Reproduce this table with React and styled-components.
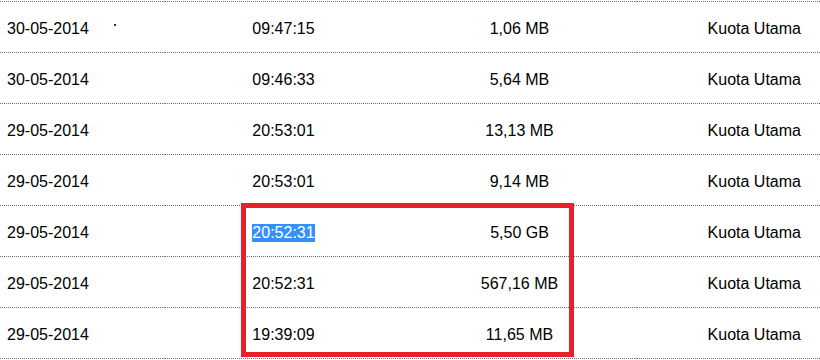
import React from 'react';
import styled, { createGlobalStyle } from 'styled-components';

const GlobalStyle = createGlobalStyle`
  body {
    margin: 0;
    background: #ffffff;
    font-family: "Liberation Sans", Arial, sans-serif;
  }
`;

const rows = [
  { date: '30-05-2014', time: '09:47:15', size: '1,06 MB' },
  { date: '30-05-2014', time: '09:46:33', size: '5,64 MB' },
  { date: '29-05-2014', time: '20:53:01', size: '13,13 MB' },
  { date: '29-05-2014', time: '20:53:01', size: '9,14 MB' },
  { date: '29-05-2014', time: '20:52:31', size: '5,50 GB', selected: true },
  { date: '29-05-2014', time: '20:52:31', size: '567,16 MB' },
  { date: '29-05-2014', time: '19:39:09', size: '11,65 MB' }
];

function App() {
  return (
    <>
      <GlobalStyle />
      <Page>
        <UsageTable>
          {rows.map((r, i) => (
            <Row key={i}>
              <Cell $align="left">
                {r.date}
                {i === 0 && <StrayDot />}
              </Cell>
              <Cell $shift={1}>{r.selected ? <Selected>{r.time}</Selected> : r.time}</Cell>
              <Cell $shift={1}>{r.size}</Cell>
              <Cell $align="right">Kuota Utama</Cell>
            </Row>
          ))}
        </UsageTable>
        {/* kotak merah penanda */}
        <Highlight />
      </Page>
    </>
  );
}

const Page = styled.div`
  position: relative;
  width: 820px;
  height: 360px;
  overflow: hidden;
`;

const UsageTable = styled.div`
  margin-top: 1px;
  width: 820px;
`;

const Row = styled.div`
  display: grid;
  grid-template-columns: 165px 235px 237px 183px;

  &:first-child > div {
    border-top: 1px dotted #6f6f6f;
    height: 52px;
  }
`;

const Cell = styled.div`
  position: relative;
  box-sizing: border-box;
  height: 51px;
  padding-top: 3px;
  display: flex;
  align-items: center;
  justify-content: ${(p) =>
    p.$align === 'left' ? 'flex-start' : p.$align === 'right' ? 'flex-end' : 'center'};
  padding-left: ${(p) => (p.$align === 'left' ? '7px' : `${(p.$shift || 0) * 2}px`)};
  padding-right: ${(p) => (p.$align === 'right' ? '19px' : '0')};
  border-bottom: 1px dotted #6f6f6f;
  font-size: 16px;
  line-height: 18px;
  color: #000000;
  white-space: nowrap;
`;

const Selected = styled.span`
  background: #3390ff;
  color: #ffffff;
`;

const StrayDot = styled.span`
  position: absolute;
  left: 114px;
  top: 22px;
  width: 2px;
  height: 2px;
  background: #333333;
`;

const Highlight = styled.div`
  position: absolute;
  left: 241px;
  top: 203px;
  width: 333px;
  height: 154px;
  box-sizing: border-box;
  border: 5px solid #e8202a;
  pointer-events: none;
`;

export default App;
